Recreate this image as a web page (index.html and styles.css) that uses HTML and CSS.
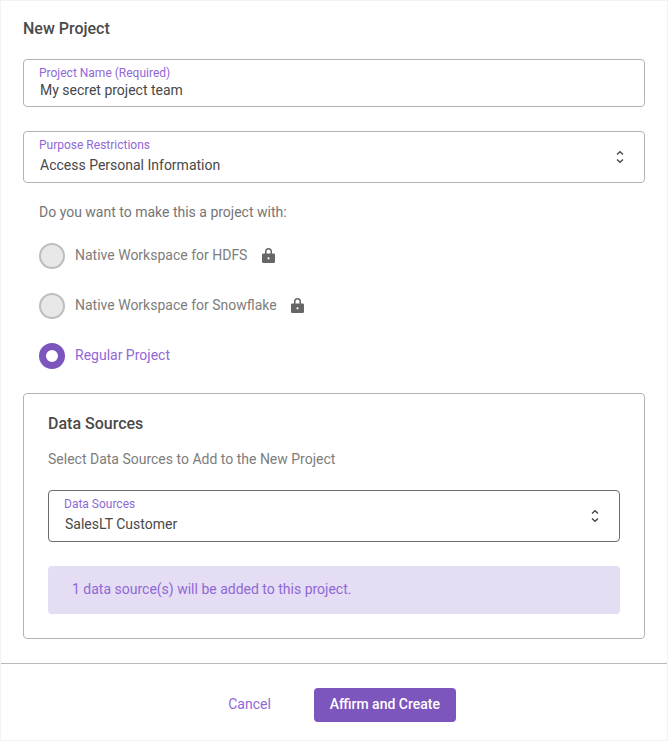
FILE: index.html
```html
<!DOCTYPE html>
<html lang="en">
<head>
<meta charset="utf-8">
<title>New Project</title>
<link rel="stylesheet" href="styles.css">
</head>
<body>
<div class="modal">
  <div class="content">
    <h1 class="title">New Project</h1>
    <div class="field field-text">
      <div class="field-label">Project Name (Required)</div>
      <div class="field-value">My secret project team</div>
    </div>
    <div class="field field-select">
      <div class="field-body">
        <div class="field-label">Purpose Restrictions</div>
        <div class="field-value">Access Personal Information</div>
      </div>
      <svg class="chevrons" width="10" height="14" viewBox="0 0 10 14" aria-hidden="true"><path d="M2 4.500 5 1.700l3 2.800M2 9.500l3 2.800 3-2.800" fill="none" stroke="#444" stroke-width="1.300"/></svg>
    </div>
    <p class="question">Do you want to make this a project with:</p>
    <div class="radios">
      <div class="radio-row">
        <span class="radio radio-disabled"></span>
        <span class="radio-text">Native Workspace for HDFS</span>
        <svg class="lock" width="13" height="15" viewBox="0 0 13 15" aria-hidden="true"><path fill-rule="evenodd" fill="#666" d="M3 5.500V3.500a3.500 3.500 0 0 1 7 0v2h1.700a1.300 1.300 0 0 1 1.300 1.300v6.900a1.300 1.300 0 0 1-1.300 1.300H1.300A1.300 1.300 0 0 1 0 13.700V6.800a1.300 1.300 0 0 1 1.300-1.300H3Zm1.500 0h4v-2a2 2 0 0 0-4 0v2ZM6.500 9.200a1.100 1.100 0 1 0 0 2.200 1.100 1.100 0 0 0 0-2.200Z"/></svg>
      </div>
      <div class="radio-row">
        <span class="radio radio-disabled"></span>
        <span class="radio-text">Native Workspace for Snowflake</span>
        <svg class="lock" width="13" height="15" viewBox="0 0 13 15" aria-hidden="true"><path fill-rule="evenodd" fill="#666" d="M3 5.500V3.500a3.500 3.500 0 0 1 7 0v2h1.700a1.300 1.300 0 0 1 1.300 1.300v6.900a1.300 1.300 0 0 1-1.300 1.300H1.300A1.300 1.300 0 0 1 0 13.700V6.800a1.300 1.300 0 0 1 1.300-1.300H3Zm1.500 0h4v-2a2 2 0 0 0-4 0v2ZM6.500 9.200a1.100 1.100 0 1 0 0 2.200 1.100 1.100 0 0 0 0-2.200Z"/></svg>
      </div>
      <div class="radio-row">
        <span class="radio radio-checked"></span>
        <span class="radio-text radio-text-checked">Regular Project</span>
      </div>
    </div>
    <section class="sources">
      <h2 class="sources-title">Data Sources</h2>
      <p class="sources-help">Select Data Sources to Add to the New Project</p>
      <div class="field field-select field-dark">
        <div class="field-body">
          <div class="field-label">Data Sources</div>
          <div class="field-value">SalesLT Customer</div>
        </div>
        <svg class="chevrons" width="10" height="14" viewBox="0 0 10 14" aria-hidden="true"><path d="M2 4.500 5 1.700l3 2.800M2 9.500l3 2.800 3-2.800" fill="none" stroke="#444" stroke-width="1.300"/></svg>
      </div>
      <div class="banner">1 data source(s) will be added to this project.</div>
    </section>
  </div>
  <footer class="footer">
    <button class="btn btn-link" type="button">Cancel</button>
    <button class="btn btn-primary" type="button">Affirm and Create</button>
  </footer>
</div>
</body>
</html>
```

FILE: styles.css
```css
* { box-sizing: border-box; }
html, body { margin: 0; padding: 0; background: #fff; }
body { font-family: Roboto, "Liberation Sans", sans-serif; color: #444; }
.modal {
  width: 668px;
  height: 741px;
  border: 1px solid #f3f3f3;
  display: flex;
  flex-direction: column;
}
.content { padding: 0 22px; flex: 1; }
.title {
  margin: 0;
  padding-top: 18px;
  height: 58px;
  font-size: 16px;
  line-height: 20px;
  font-weight: 500;
  color: #4a4a4a;
}
.field {
  border: 1px solid #b3b3b3;
  border-radius: 4px;
  background: #fff;
}
.field-text { height: 48px; padding: 6px 15px 0; margin-bottom: 24px; }
.field-select {
  height: 52px;
  padding: 6px 19px 0 15px;
  display: flex;
  align-items: center;
  justify-content: space-between;
}
.field-body { flex: 1; align-self: flex-start; }
.field-dark { border-color: #6b6b6b; margin-bottom: 24px; }
.field-label { font-size: 12px; line-height: 14px; color: #9068d6; }
.field-value { font-size: 14px; line-height: 20px; color: #484848; padding-left: 1px; }
.field-select .field-value { margin-top: 3px; }
.field-select .chevrons { margin-top: -6px; }
.question {
  margin: 19px 0 0 16px;
  font-size: 14px;
  line-height: 20px;
  color: #757575;
}
.radios { margin-top: 21px; display: flex; flex-direction: column; gap: 24px; }
.radio-row { height: 26px; display: flex; align-items: center; padding-left: 16px; }
.radio { width: 26px; height: 26px; border-radius: 50%; flex: none; margin-right: 10px; }
.radio-disabled { background: #e8e8e8; border: 2px solid #bdbdbd; }
.radio-checked { background: #fff; border: 7px solid #7c55bd; }
.radio-text { font-size: 14px; line-height: 20px; color: #7d7d7d; padding-bottom: 2px; box-sizing: content-box; }
.radio-text-checked { color: #9068d6; }
.lock { margin: 0 0 2px 14.5px; }
.sources {
  margin-top: 24px;
  height: 246px;
  border: 1px solid #b3b3b3;
  border-radius: 4px;
  padding: 20px 24px 0;
}
.sources-title { margin: 0; font-size: 16px; line-height: 20px; font-weight: 500; color: #4a4a4a; }
.sources-help { margin: 15px 0 21px; font-size: 14px; line-height: 20px; color: #7d7d7d; }
.banner {
  height: 48px;
  background: #e4ddf4;
  border-radius: 4px;
  padding: 0 24px 2px;
  display: flex;
  align-items: center;
  font-size: 14px;
  color: #9068d6;
}
.footer {
  height: 77px;
  border-top: 1px solid #b8b8b8;
  display: flex;
  justify-content: center;
  align-items: center;
  padding: 6px 0 0 16px;
  gap: 43px;
}
.btn {
  font-family: inherit;
  font-size: 14px;
  border-radius: 4px;
  border: 0;
  height: 34px;
  padding: 0 0 2px;
}
.btn-link { background: none; color: #9068d6; }
.btn-primary { width: 142px; background: #7c55bd; color: #fff; font-weight: 500; }
```
